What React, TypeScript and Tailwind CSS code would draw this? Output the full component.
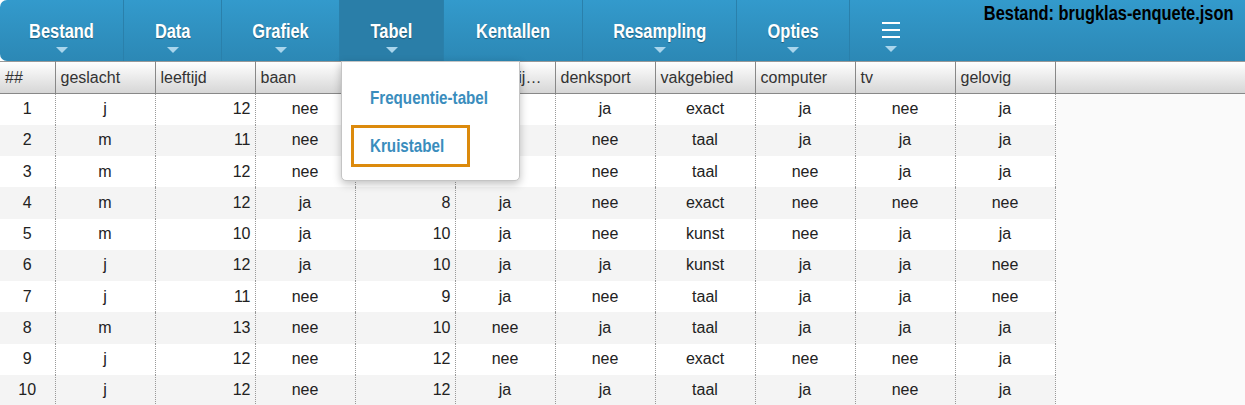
import React from "react";

const menu = [
  { label: "Bestand", w: "w-[124px]", arrow: true },
  { label: "Data", w: "w-[98px]", arrow: true },
  { label: "Grafiek", w: "w-[118px]", arrow: true },
  { label: "Tabel", w: "w-[104px]", arrow: true, active: true },
  { label: "Kentallen", w: "w-[139px]", arrow: false },
  { label: "Resampling", w: "w-[154px]", arrow: true },
  { label: "Opties", w: "w-[113px]", arrow: true },
];

const columns = [
  { name: "##", w: "w-[55px]", align: "text-center" },
  { name: "geslacht", w: "w-[100px]", align: "text-center" },
  { name: "leeftijd", w: "w-[100px]", align: "text-right" },
  { name: "baan", w: "w-[100px]", align: "text-center" },
  { name: "sporturen", w: "w-[100px]", align: "text-right" },
  { name: "studeertij…", w: "w-[100px]", align: "text-center" },
  { name: "denksport", w: "w-[100px]", align: "text-center" },
  { name: "vakgebied", w: "w-[100px]", align: "text-center" },
  { name: "computer", w: "w-[100px]", align: "text-center" },
  { name: "tv", w: "w-[100px]", align: "text-center" },
  { name: "gelovig", w: "w-[100px]", align: "text-center" },
];

const rows = [
  ["1", "j", "12", "nee", "9", "ja", "ja", "exact", "ja", "nee", "ja"],
  ["2", "m", "11", "nee", "10", "nee", "nee", "taal", "ja", "ja", "ja"],
  ["3", "m", "12", "nee", "11", "ja", "nee", "taal", "nee", "ja", "ja"],
  ["4", "m", "12", "ja", "8", "ja", "nee", "exact", "nee", "nee", "nee"],
  ["5", "m", "10", "ja", "10", "ja", "nee", "kunst", "nee", "ja", "ja"],
  ["6", "j", "12", "ja", "10", "ja", "ja", "kunst", "ja", "ja", "nee"],
  ["7", "j", "11", "nee", "9", "ja", "nee", "taal", "ja", "ja", "nee"],
  ["8", "m", "13", "nee", "10", "nee", "ja", "taal", "ja", "ja", "ja"],
  ["9", "j", "12", "nee", "12", "nee", "nee", "exact", "nee", "nee", "ja"],
  ["10", "j", "12", "nee", "12", "ja", "ja", "taal", "ja", "nee", "ja"],
];

function Arrow() {
  return (
    <div className="h-0 w-0 border-l-[6px] border-r-[6px] border-t-[6px] border-l-transparent border-r-transparent border-t-[#a9d5ec]" />
  );
}

export default function App() {
  // smalle vette letter: Liberation Sans Bold, horizontaal samengedrukt
  const narrow = "inline-block font-['Liberation_Sans',Arial,sans-serif] font-bold scale-x-[0.82]";
  return (
    <div className="relative h-[405px] w-[1245px] overflow-hidden bg-white font-['Liberation_Sans',Arial,sans-serif]">
      {/* menubalk */}
      <nav className="flex h-[61px] rounded-l-[7px] bg-linear-to-b from-[#339acc] to-[#2c88b5]">
        {menu.map((m) => (
          <div
            key={m.label}
            className={`flex ${m.w} shrink-0 flex-col items-center border-r border-[#2a80ab] pt-[20px] ${
              m.active ? "bg-[#2a7ea8]" : ""
            }`}
          >
            <span
              className={`${narrow} origin-center whitespace-nowrap text-[20px] leading-[22px] text-white [text-shadow:0_1px_1px_rgba(0,0,0,0.35)]`}
            >
              {m.label}
            </span>
            <div className="mt-[5px]">{m.arrow && <Arrow />}</div>
          </div>
        ))}
        <div className="flex w-[82px] shrink-0 flex-col items-center pt-[22px]">
          <div className="flex w-[18px] flex-col gap-[5px]">
            <div className="h-[2px] bg-white" />
            <div className="h-[2px] bg-white" />
            <div className="h-[2px] bg-white" />
          </div>
          <div className="mt-[8px]">
            <Arrow />
          </div>
        </div>
        <div className="flex min-w-0 flex-1 justify-end pr-[12px] pt-[2px]">
          <span className={`${narrow} h-[22px] shrink-0 origin-right whitespace-nowrap text-[20px] leading-[22px] text-black`}>
            Bestand: brugklas-enquete.json
          </span>
        </div>
      </nav>

      {/* tabel */}
      <table className="w-full table-fixed border-collapse border-t border-[#999] text-[16px] text-[#222]">
        <thead>
          <tr className="h-[32px] bg-linear-to-b from-white to-[#d5d5d5]">
            {columns.map((c) => (
              <th
                key={c.name}
                className={`${c.w} overflow-hidden whitespace-nowrap border-r border-b border-[#888] px-[5px] text-left font-normal text-[#333]`}
              >
                {c.name}
              </th>
            ))}
            <th className="border-b border-[#888]" />
          </tr>
        </thead>
        <tbody>
          {rows.map((r, i) => (
            <tr key={i} className={`h-[31.25px] ${i % 2 === 1 ? "bg-[#f4f4f4]" : "bg-white"}`}>
              {r.map((v, j) => (
                <td
                  key={j}
                  className={`border-r border-dotted border-[#999] px-[4px] ${columns[j].align}`}
                >
                  {v}
                </td>
              ))}
              <td className="bg-[#fafafa]" />
            </tr>
          ))}
        </tbody>
      </table>

      {/* uitklapmenu Tabel */}
      <div className="absolute left-[341px] top-[61px] flex h-[120px] w-[179px] flex-col gap-[6px] rounded-b-[5px] border border-[#c4c4c4] bg-white pl-[9px] pt-[15px] shadow-[0_3px_8px_rgba(0,0,0,0.25)]">
        <div className="flex h-[42px] w-[119px] items-center border-[3px] border-transparent px-[16px]">
          <span className={`${narrow} origin-left whitespace-nowrap text-[18.5px] text-[#3a8dbd]`}>
            Frequentie-tabel
          </span>
        </div>
        <div className="flex h-[42px] w-[119px] items-center border-[3px] border-[#dc8a0c] px-[16px]">
          <span className={`${narrow} origin-left whitespace-nowrap text-[18.5px] text-[#3a8dbd]`}>
            Kruistabel
          </span>
        </div>
      </div>
    </div>
  );
}
